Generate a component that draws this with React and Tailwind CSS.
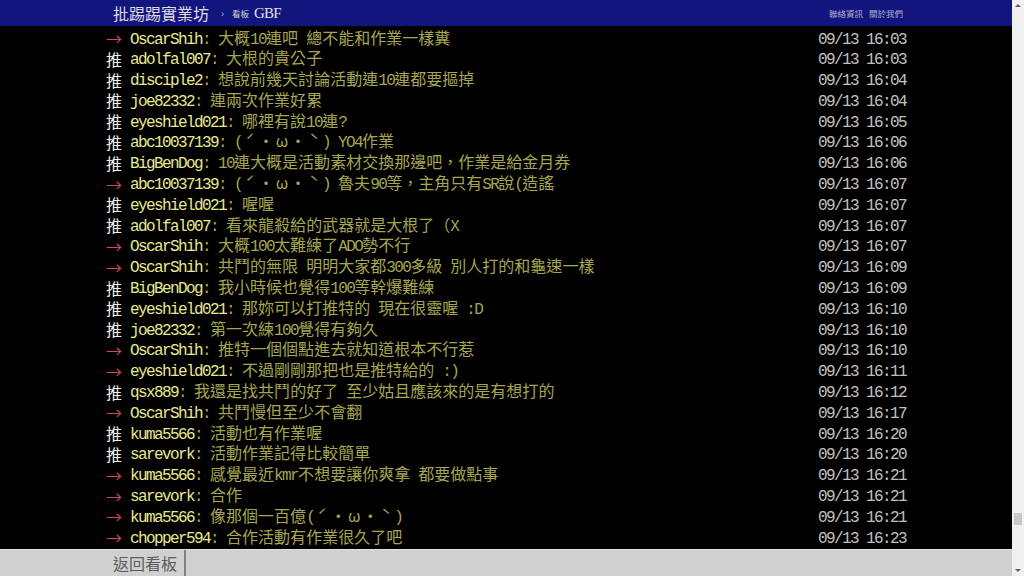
import React from "react";

const rows = [
  ["a", "OscarShih", "大概10連吧 總不能和作業一樣糞", "09/13 16:03"],
  ["p", "adolfal007", "大根的貴公子", "09/13 16:03"],
  ["p", "disciple2", "想說前幾天討論活動連10連都要摳掉", "09/13 16:04"],
  ["p", "joe82332", "連兩次作業好累", "09/13 16:04"],
  ["p", "eyeshield021", "哪裡有說10連?", "09/13 16:05"],
  ["p", "abc10037139", "(ˊ・ω・ˋ) YO4作業", "09/13 16:06"],
  ["p", "BigBenDog", "10連大概是活動素材交換那邊吧，作業是給金月券", "09/13 16:06"],
  ["a", "abc10037139", "(ˊ・ω・ˋ) 魯夫90等，主角只有SR說(造謠", "09/13 16:07"],
  ["p", "eyeshield021", "喔喔", "09/13 16:07"],
  ["p", "adolfal007", "看來龍殺給的武器就是大根了（X", "09/13 16:07"],
  ["a", "OscarShih", "大概100太難練了ADO勢不行", "09/13 16:07"],
  ["a", "OscarShih", "共鬥的無限 明明大家都300多級 別人打的和龜速一樣", "09/13 16:09"],
  ["p", "BigBenDog", "我小時候也覺得100等幹爆難練", "09/13 16:09"],
  ["p", "eyeshield021", "那妳可以打推特的 現在很靈喔 :D", "09/13 16:10"],
  ["p", "joe82332", "第一次練100覺得有夠久", "09/13 16:10"],
  ["a", "OscarShih", "推特一個個點進去就知道根本不行惹", "09/13 16:10"],
  ["a", "eyeshield021", "不過剛剛那把也是推特給的 :)", "09/13 16:11"],
  ["p", "qsx889", "我還是找共鬥的好了 至少姑且應該來的是有想打的", "09/13 16:12"],
  ["a", "OscarShih", "共鬥慢但至少不會翻", "09/13 16:17"],
  ["p", "kuma5566", "活動也有作業喔", "09/13 16:20"],
  ["p", "sarevork", "活動作業記得比較簡單", "09/13 16:20"],
  ["a", "kuma5566", "感覺最近kmr不想要讓你爽拿 都要做點事", "09/13 16:21"],
  ["a", "sarevork", "合作", "09/13 16:21"],
  ["a", "kuma5566", "像那個一百億(ˊ・ω・ˋ)", "09/13 16:21"],
  ["a", "chopper594", "合作活動有作業很久了吧", "09/13 16:23"],
];

const WIDE = "ˊˋω";

function T({ s }) {
  const parts = s.split(/([\x20-\x7e]+)/);
  return parts.map((p, i) => {
    if (p === "") return null;
    if (/^[\x20-\x7e]+$/.test(p)) {
      return (
        <span key={i} className="font-['Liberation_Mono',monospace] tracking-[-1.6px]">
          {p}
        </span>
      );
    }
    return (
      <span key={i}>
        {Array.from(p).map((c, j) =>
          WIDE.includes(c) ? (
            <span key={j} className="inline-block w-4 text-center">
              {c}
            </span>
          ) : (
            c
          )
        )}
      </span>
    );
  });
}

export default function App() {
  return (
    <div className="flex h-[576px] w-[1024px] overflow-hidden bg-black font-['Noto_Sans_CJK_TC',sans-serif]">
      <div className="flex w-[1012px] flex-col">
        <div className="h-[26px] shrink-0 bg-[#13157f]">
          <div className="mx-auto flex h-full w-[800px] items-center pl-[7px] pr-[3px]">
            <span className="text-[16px] leading-none text-[#dcdcdc]">批踢踢實業坊</span>
            <span className="ml-[12px] text-[10px] leading-none text-[#b8b8c8]">›</span>
            <span className="ml-[8px] text-[8.5px] leading-none text-[#d0d0d0]">看板</span>
            <span className="ml-[5px] font-['Liberation_Serif',serif] text-[15px] leading-none tracking-[-0.8px] text-[#e0e0e0]">
              GBF
            </span>
            <div className="ml-auto flex gap-[6px] text-[8.5px] leading-none text-[#b0b0c8]">
              <span>聯絡資訊</span>
              <span>關於我們</span>
            </div>
          </div>
        </div>
        <div className="flex-1 overflow-hidden pt-[2px]">
          <div className="mx-auto w-[800px] whitespace-pre text-[16px]">
            {rows.map((r, i) => (
              <div key={i} className="flex h-[20.8px] items-center leading-[20.8px]">
                {r[0] === "p" ? (
                  <span className="w-4 text-[#f2f2f2]">推</span>
                ) : (
                  <span className="w-4 text-[#c44a5c]">→</span>
                )}
                <span className="w-2" />
                <span className="text-[#e8e890]">
                  <T s={r[1]} />
                </span>
                <span className="text-[#a6a650]">
                  <T s={": " + r[2]} />
                </span>
                <span className="ml-auto text-[#c0c0c0]">
                  <T s={r[3]} />
                </span>
              </div>
            ))}
          </div>
        </div>
        <div className="flex h-[27px] shrink-0 border-t border-[#e2e2e2] bg-[#d0d0d0]">
          <div className="ml-[106px] flex h-full items-center pl-[7px] pr-[7px] text-[16px] leading-none text-[#5c5c5c]">
            返回看板
          </div>
          <div className="h-full w-[2px] bg-[#808080]" />
        </div>
      </div>
      <div className="flex w-[12px] flex-col items-center bg-[#f0f0f0]">
        <div className="mt-[4px] h-0 w-0 border-x-[3px] border-b-[3px] border-x-transparent border-b-[#606060]" />
        <div className="flex-1" />
        <div className="h-[12px] w-[8px] bg-[#c8c8c8]" />
        <div className="h-[44px]" />
        <div className="mb-[4px] h-0 w-0 border-x-[3px] border-t-[3px] border-x-transparent border-t-[#606060]" />
      </div>
    </div>
  );
}
